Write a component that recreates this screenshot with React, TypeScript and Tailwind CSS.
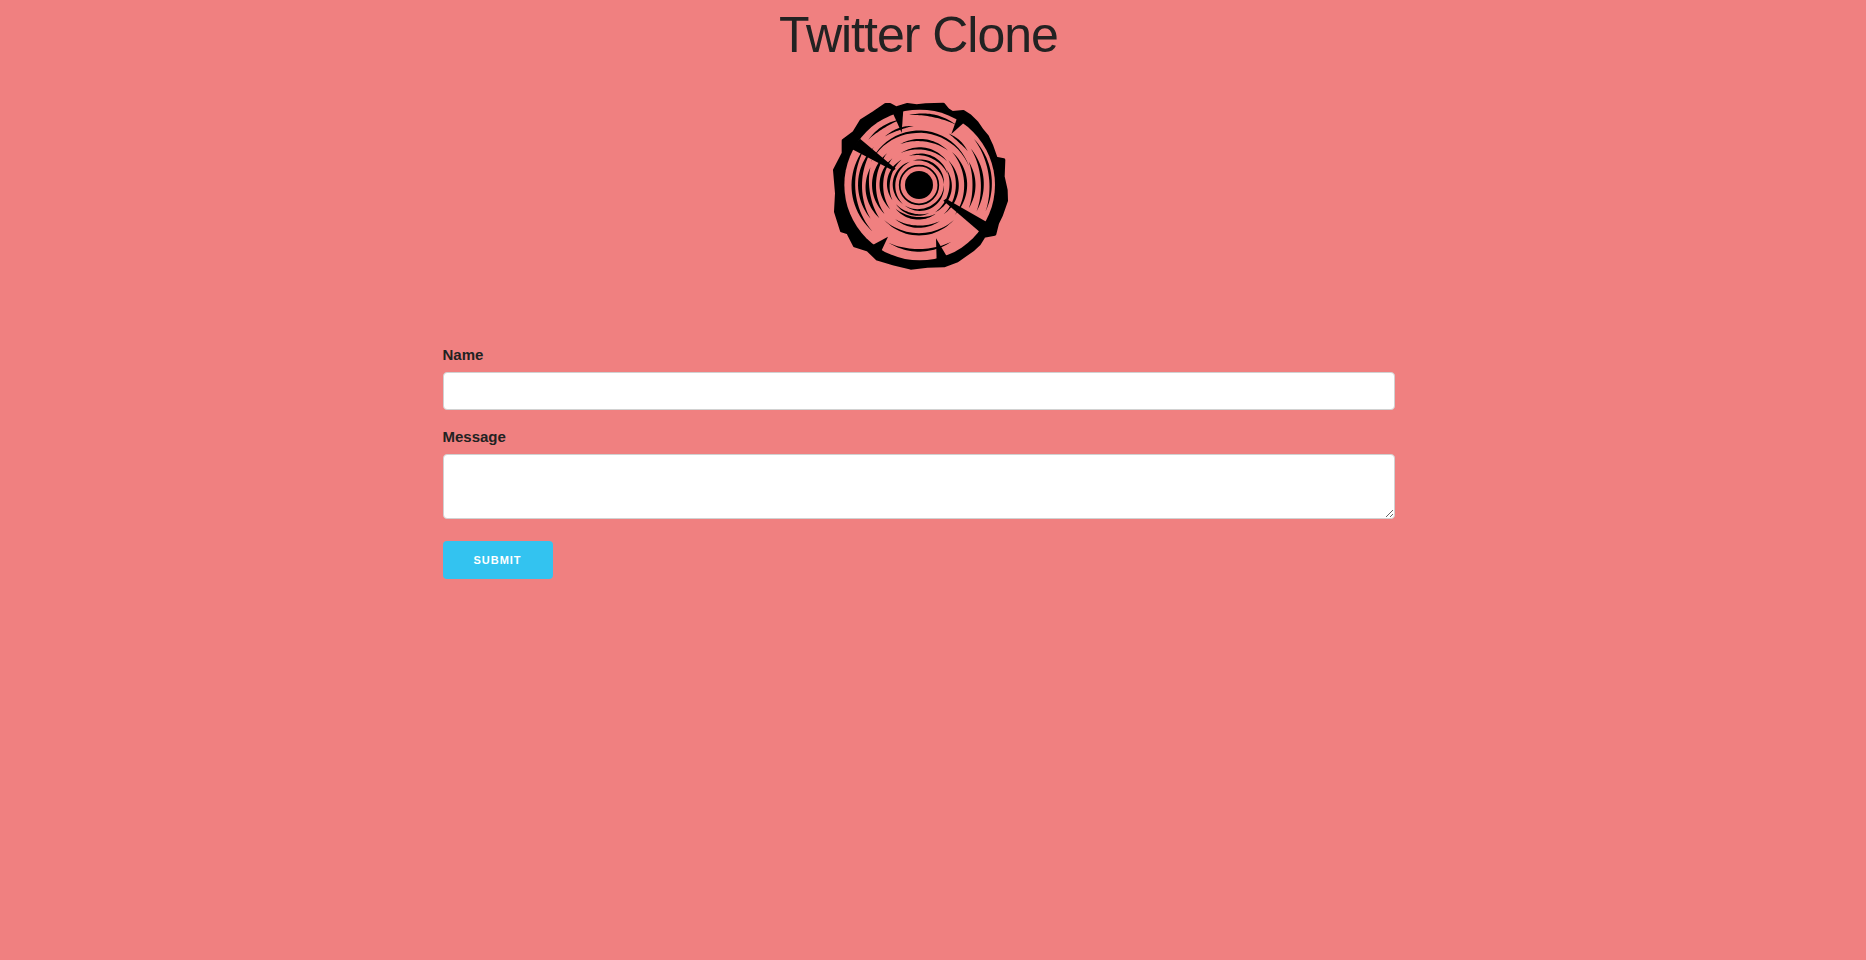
const OUTLINE =
  'M238,44 L256,54 L290,44 L318,48 L345,45 L398,43 L412,60 L425,68 L458,65 L478,78 L498,97 L515,122 L530,140 L543,168 L556,205 L579,210 L577,260 L586,300 L587,332 L572,375 L560,400 L552,432 L520,438 L505,462 L488,478 L440,512 L400,527 L350,528 L300,534 L250,522 L200,507 L172,480 L132,467 L112,428 L93,422 L75,365 L78,310 L72,240 L98,190 L98,152 L130,128 L152,92 L190,68 L225,44 Z'

// tapered ring pieces: radius, start angle, end angle, max width
const ARCS: [number, number, number, number][] = [
  [75, 0, 125, 7], [75, 130, 250, 8], [75, 255, 358, 7],
  [92, 150, 235, 9], [92, 250, 340, 7], [95, -30, 60, 8], [90, 70, 140, 6],
  [113, 140, 225, 11], [110, 240, 320, 7], [115, -40, 50, 9], [100, 60, 135, 8],
  [135, 140, 225, 12], [135, 245, 310, 7], [140, -45, 40, 9], [125, 60, 125, 7],
  [160, 205, 340, 7], [148, 45, 135, 7],
  [155, 140, 200, 12], [165, -25, 25, 9],
  [177, 145, 220, 12], [190, -35, 25, 9], [178, 235, 265, 6], [178, 300, 325, 6],
  [197, 135, 218, 11], [215, -40, 22, 8], [196, 60, 118, 8],
  [212, 262, 302, 8], [204, 222, 255, 7],
]

function crescent(r: number, a: number, b: number, w: number) {
  const cx = 325
  const cy = 285
  const n = 24
  const outer: string[] = []
  const inner: string[] = []
  for (let i = 0; i <= n; i++) {
    const t = i / n
    const ang = ((a + (b - a) * t) * Math.PI) / 180
    const half = (w / 2) * Math.sin(Math.PI * t)
    outer.push(`${(cx + (r + half) * Math.cos(ang)).toFixed(1)},${(cy + (r + half) * Math.sin(ang)).toFixed(1)}`)
    inner.unshift(`${(cx + (r - half) * Math.cos(ang)).toFixed(1)},${(cy + (r - half) * Math.sin(ang)).toFixed(1)}`)
  }
  return `M${outer.join(' L')} L${inner.join(' L')} Z`
}

function Logo() {
  return (
    <svg viewBox="10 0 630 570" className="block mx-auto w-[210px] h-[190px]">
      <path d={OUTLINE} fill="#000" stroke="#000" strokeWidth="10" strokeLinejoin="round" />
      <circle cx="327" cy="285" r="226" fill="#f08080" />
      <circle cx="325" cy="285" r="58" fill="none" stroke="#000" strokeWidth="5" />
      <circle cx="325" cy="285" r="42" fill="#000" />
      {ARCS.map(([r, a, b, w]) => (
        <path key={`${r}-${a}`} d={crescent(r, a, b, w)} fill="#000" />
      ))}
      {/* cracks */}
      <path d="M122,176 L148,146 L255,236 L248,242 Z" fill="#000" />
      <path d="M398,332 L406,326 L532,398 L510,428 Z" fill="#000" />
      <path d="M240,55 L278,58 L273,128 Z" fill="#000" />
      <path d="M376,445 L412,505 L378,515 Z" fill="#000" />
      <path d="M422,132 L445,68 L478,82 Z" fill="#000" />
      <path d="M232,440 L168,475 L205,498 Z" fill="#000" />
    </svg>
  )
}

export default function App() {
  return (
    <div className="min-h-[960px] bg-[#f08080] font-['Liberation_Sans',Arial,sans-serif] text-[#222]">
      <div className="w-[1837px]">
        <h1 className="pt-[5px] text-center text-[50px] leading-[60px] tracking-[-1px] font-light">Twitter Clone</h1>
        <div className="mt-[25px]">
          <Logo />
        </div>
        <form className="w-[952px] mx-auto mt-[63px]">
          <label className="block text-[15px] leading-[24px] font-bold mb-[5px]">Name</label>
          <input type="text" className="block w-full h-[38px] bg-white border border-[#d1d1d1] rounded mb-[15px] px-[10px] outline-none" />
          <label className="block text-[15px] leading-[24px] font-bold mb-[5px]">Message</label>
          <textarea className="block w-full h-[65px] bg-white border border-[#d1d1d1] rounded mb-[22px] px-[10px] outline-none" />
          <button type="button" className="block w-[110px] h-[38px] bg-[#33c3f0] rounded text-white text-[11px] font-bold uppercase tracking-[1px]">
            Submit
          </button>
        </form>
      </div>
    </div>
  )
}
